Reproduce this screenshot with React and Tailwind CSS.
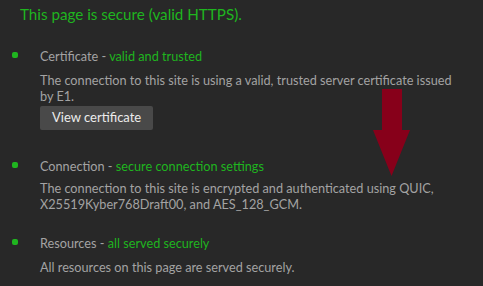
import React from 'react';

const Item = ({ label, status, gap = 'mt-2', className = '', children }) => (
  <li className={`flex ${className}`}>
    <span className="ml-3 mt-[4px] w-[6px] h-[6px] rounded-[2px] bg-[#1fb51f] shrink-0" />
    <div className="ml-[22px]">
      <p className="text-[12.7px] leading-4 text-[#a3a3a3] whitespace-nowrap">
        {label} - <span className="text-[#1fb51f]">{status}</span>
      </p>
      <div className={gap}>{children}</div>
    </div>
  </li>
);

export default function App() {
  return (
    <div className="relative w-[483px] h-[286px] overflow-hidden bg-[#282828] font-['Lato',sans-serif]">
      <h1 className="pl-5 pt-1 text-[15.2px] leading-5 text-[#1fb51f]">
        This page is secure (valid HTTPS).
      </h1>

      <ul className="mt-6 flex flex-col">
        <Item label="Certificate" status="valid and trusted">
          <p className="text-[12.7px] leading-4 text-[#a3a3a3] whitespace-nowrap">
            The connection to this site is using a valid, trusted server certificate issued
            <br />
            by E1.
          </p>
          <button className="mt-[2px] h-6 px-3 rounded-[2px] bg-[#494949] text-[13px] text-[#ececec]">
            View certificate
          </button>
        </Item>

        <Item label="Connection" status="secure connection settings" gap="mt-[6px]" className="mt-[28px]">
          <p className="text-[12.7px] leading-4 text-[#a3a3a3] whitespace-nowrap">
            The connection to this site is encrypted and authenticated using QUIC,
            <br />
            X25519Kyber768Draft00, and AES_128_GCM.
          </p>
        </Item>

        <Item label="Resources" status="all served securely" className="mt-[23px]">
          <p className="text-[12.7px] leading-4 text-[#a3a3a3] whitespace-nowrap">
            All resources on this page are served securely.
          </p>
        </Item>
      </ul>

      {/* red arrow drawn over the page */}
      <svg className="absolute left-[373px] top-[89px]" width="37" height="87" viewBox="0 0 37 87">
        <polygon points="9,0 29,0 29,41 37,41 18.5,87 0,41 9,41" fill="#87001a" />
      </svg>
    </div>
  );
}
